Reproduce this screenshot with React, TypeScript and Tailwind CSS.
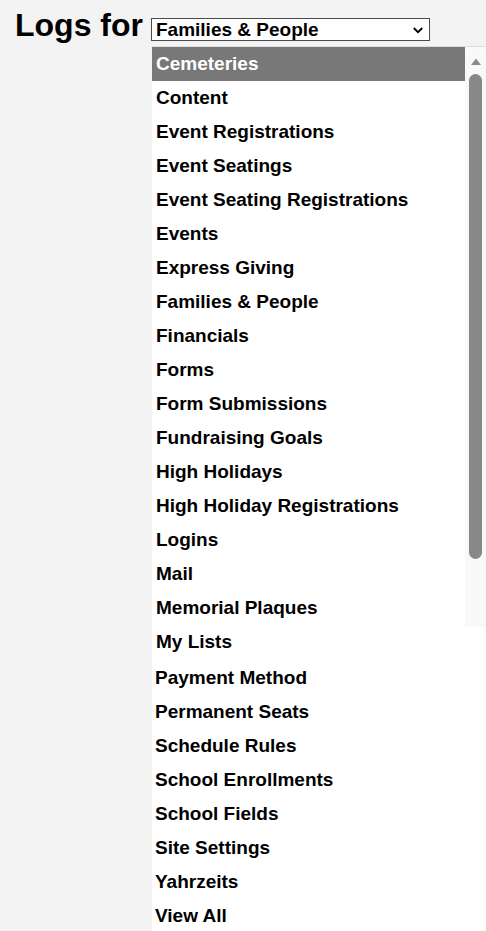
import React from "react";

const dropItems = [
  "Cemeteries",
  "Content",
  "Event Registrations",
  "Event Seatings",
  "Event Seating Registrations",
  "Events",
  "Express Giving",
  "Families & People",
  "Financials",
  "Forms",
  "Form Submissions",
  "Fundraising Goals",
  "High Holidays",
  "High Holiday Registrations",
  "Logins",
  "Mail",
  "Memorial Plaques",
  "My Lists",
];

const lowerItems = [
  "Payment Method",
  "Permanent Seats",
  "Schedule Rules",
  "School Enrollments",
  "School Fields",
  "Site Settings",
  "Yahrzeits",
  "View All",
];

export default function App() {
  return (
    <div
      className="min-h-[931px] w-full bg-[#f3f3f3] text-black overflow-hidden"
      style={{ fontFamily: '"Liberation Sans", Arial, sans-serif' }}
    >
      {/* header */}
      <div className="flex items-start h-[46px]">
        <h1 className="ml-[15px] mt-[7px] text-[32px] leading-[37px] font-bold whitespace-nowrap">
          Logs for
        </h1>
        <div className="ml-[8px] mt-[18px] w-[279px] h-[23px] border border-[#4a4a4a] bg-white flex items-center justify-between pl-[4px] pr-[6px]">
          <span className="text-[19px] leading-[21px] font-bold whitespace-nowrap">
            Families &amp; People
          </span>
          <svg width="10" height="7" viewBox="0 0 10 7" className="mt-[1px]">
            <path d="M0.8 1 L5 5.2 L9.2 1" fill="none" stroke="#000" strokeWidth="1.8" />
          </svg>
        </div>
      </div>

      {/* body */}
      <div className="flex">
        <div className="w-[152px] shrink-0" />
        <div className="flex-1 bg-white border-t border-[#dcdcdc] flex flex-col">
          {/* dropdown */}
          <div className="flex items-start">
            <div className="w-[313px] flex flex-col">
              {dropItems.map((it, i) => (
                <div
                  key={it}
                  className={
                    "h-[34px] flex items-center pl-[4px] text-[19px] font-bold whitespace-nowrap " +
                    (i === 0 ? "bg-[#787878] text-white" : "text-black")
                  }
                >
                  {it}
                </div>
              ))}
            </div>
            <div className="w-[21px] h-[580px] bg-[#f9f9f9] flex flex-col items-center">
              <svg width="12" height="9" viewBox="0 0 12 9" className="mt-[10px]">
                <path d="M1 8 L6 1.5 L11 8 Z" fill="#8a8a8a" />
              </svg>
              <div className="mt-[8px] w-[13px] h-[485px] rounded-full bg-[#888888]" />
            </div>
          </div>

          {/* rest */}
          <div className="mt-[2px] flex flex-col">
            {lowerItems.map((it) => (
              <div
                key={it}
                className="h-[34px] flex items-center pl-[3px] text-[19px] font-bold whitespace-nowrap"
              >
                {it}
              </div>
            ))}
          </div>
        </div>
      </div>
    </div>
  );
}
